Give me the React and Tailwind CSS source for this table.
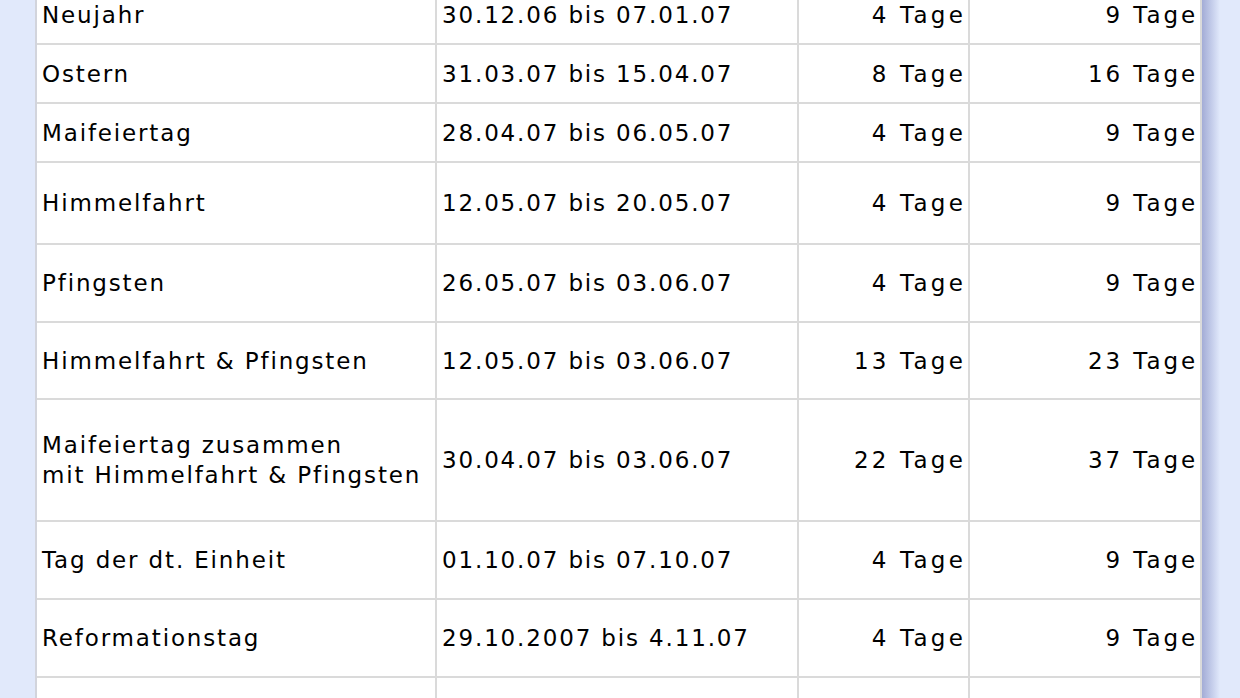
import React from "react";

const rows = [
  { name: ["Neujahr"], range: "30.12.06 bis 07.01.07", a: "4 Tage", b: "9 Tage", h: "h-[59px]" },
  { name: ["Ostern"], range: "31.03.07 bis 15.04.07", a: "8 Tage", b: "16 Tage", h: "h-[59px]" },
  { name: ["Maifeiertag"], range: "28.04.07 bis 06.05.07", a: "4 Tage", b: "9 Tage", h: "h-[59px]" },
  { name: ["Himmelfahrt"], range: "12.05.07 bis 20.05.07", a: "4 Tage", b: "9 Tage", h: "h-[82px]" },
  { name: ["Pfingsten"], range: "26.05.07 bis 03.06.07", a: "4 Tage", b: "9 Tage", h: "h-[78px]" },
  { name: ["Himmelfahrt & Pfingsten"], range: "12.05.07 bis 03.06.07", a: "13 Tage", b: "23 Tage", h: "h-[77px]" },
  { name: ["Maifeiertag zusammen", "mit Himmelfahrt & Pfingsten"], range: "30.04.07 bis 03.06.07", a: "22 Tage", b: "37 Tage", h: "h-[122px]" },
  { name: ["Tag der dt. Einheit"], range: "01.10.07 bis 07.10.07", a: "4 Tage", b: "9 Tage", h: "h-[78px]" },
  { name: ["Reformationstag"], range: "29.10.2007 bis 4.11.07", a: "4 Tage", b: "9 Tage", h: "h-[78px]" },
  { name: [""], range: "", a: "", b: "", h: "h-[78px]" },
];

export default function App() {
  return (
    <div
      className="w-[1240px] h-[698px] overflow-hidden bg-[#e1e9fb] flex items-start text-black"
      style={{ fontFamily: '"DejaVu Sans", Verdana, sans-serif' }}
    >
      <div className="w-[35px] shrink-0" />
      <div className="flex flex-col -mt-[14px] border-l-2 border-[#d2d4dc] bg-white shrink-0">
        {rows.map((r, i) => (
          <div key={i} className={`flex shrink-0 ${r.h} border-b-2 border-[#dadada]`}>
            <div className="w-[400px] shrink-0 border-r-2 border-[#dadada] flex flex-col justify-center pl-[5px] text-[23px] leading-[30px] tracking-[1.85px]">
              {r.name.map((n, j) => (
                <span key={j} className="whitespace-nowrap">{n}</span>
              ))}
            </div>
            <div className="w-[362px] shrink-0 border-r-2 border-[#dadada] flex items-center pl-[5px] text-[23px] leading-[30px] tracking-[1.85px] whitespace-nowrap">
              {r.range}
            </div>
            <div className="w-[171px] shrink-0 border-r-2 border-[#dadada] flex items-center justify-end pr-[2px] text-[23px] leading-[30px] tracking-[3.2px] whitespace-nowrap">
              {r.a}
            </div>
            <div className="w-[232px] shrink-0 border-r-2 border-[#dadada] flex items-center justify-end pr-[2px] text-[23px] leading-[30px] tracking-[2.9px] whitespace-nowrap">
              {r.b}
            </div>
          </div>
        ))}
      </div>
      <div className="w-[18px] self-stretch shrink-0 bg-gradient-to-r from-[#a3acd6] to-[#e1e9fb]" />
    </div>
  );
}
